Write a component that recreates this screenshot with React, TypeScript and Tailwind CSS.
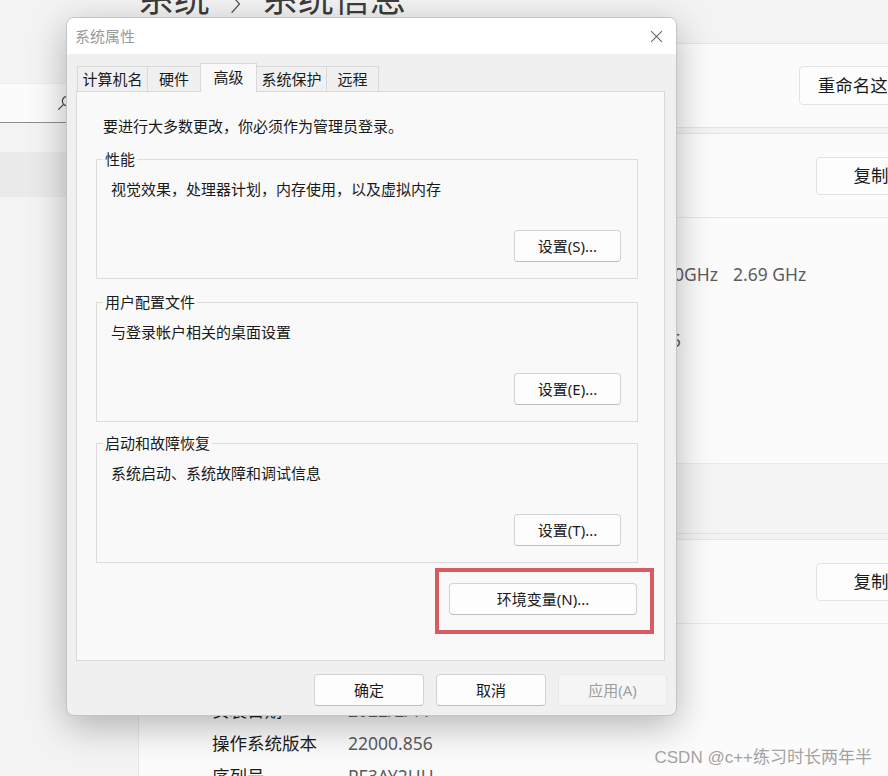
import React from "react";

type BtnProps = { label: string; className?: string; disabled?: boolean };

function WinButton({ label, className = "", disabled = false }: BtnProps) {
  return (
    <button
      type="button"
      disabled={disabled}
      className={`flex items-center justify-center rounded-[4px] border text-[15px] leading-none ${
        disabled
          ? "border-[#e9e9e9] bg-[#f5f5f5] text-[#9e9e9e]"
          : "border-[#d3d3d3] border-b-[#bdbdbd] bg-[#fdfdfd] text-[#1a1a1a]"
      } ${className}`}
    >
      {label}
    </button>
  );
}

function GroupBox({ title, text, button }: { title: string; text: string; button: string }) {
  return (
    <fieldset className="border border-[#dcdcdc]">
      <legend className="ml-[6px] px-[2px] text-[15px] leading-[20px] text-[#1a1a1a]">{title}</legend>
      <p className="mt-[10px] pl-[14px] text-[15px] leading-[20px] text-[#1a1a1a]">{text}</p>
      <div className="mt-[31px] flex justify-end pr-[16px] pb-[16px]">
        <WinButton label={button} className="h-[32px] w-[107px]" />
      </div>
    </fieldset>
  );
}

const tabs = [
  { label: "计算机名", w: "w-[71px]" },
  { label: "硬件", w: "w-[54px]" },
  { label: "高级", w: "w-[57px]", active: true },
  { label: "系统保护", w: "w-[71px]" },
  { label: "远程", w: "w-[53px]" },
];

// only the part of each row that shows to the right of the dialog is filled in
const specRows: React.ReactNode[] = [
  null,
  <>
    <span className="flex w-[370px] justify-end overflow-hidden whitespace-nowrap">@ 2.70GHz</span>
    <span className="ml-[15px] whitespace-nowrap">2.69 GHz</span>
  </>,
  null,
  <span className="flex w-[333px] justify-end overflow-hidden whitespace-nowrap">B25</span>,
  null,
  null,
  null,
];

const winRows = [
  { label: "", value: "" },
  { label: "", value: "" },
  { label: "安装日期", value: "2022/2/11" },
  { label: "操作系统版本", value: "22000.856" },
  { label: "序列号", value: "PF3AY2HH" },
];

function Chevron() {
  return (
    <svg viewBox="0 0 16 16" className="h-[14px] w-[14px]" fill="none" stroke="#555" strokeWidth="1.2">
      <path d="M5 3l5 5-5 5" />
    </svg>
  );
}

function SpecRow({ label, value }: { label: string; value: React.ReactNode }) {
  return (
    <div className="flex h-[33px] items-center pl-[73px] text-[17.5px]">
      <span className="w-[136px] shrink-0 text-[#1b1b1b]">{label}</span>
      <span className="flex items-center text-[#5c5c5c]">{value}</span>
    </div>
  );
}

export default function App() {
  return (
    <div className="relative flex h-[776px] w-[888px] overflow-hidden bg-[#f3f3f3] font-['Noto_Sans','Noto_Sans_CJK_SC',sans-serif]">
      {/* settings sidebar */}
      <aside className="w-[138px] shrink-0 pt-[83px]">
        <div className="mr-[16px] flex h-[40px] items-center rounded-r-[4px] border-t border-[#ededed] border-b border-b-[#8d8d8d] bg-[#fbfbfb] pl-[57px]">
          <svg viewBox="0 0 16 16" className="h-[16px] w-[16px]" fill="none" stroke="#444" strokeWidth="1.2">
            <circle cx="10" cy="6" r="4.6" />
            <path d="M6.6 9.4L1.6 14.4" strokeLinecap="round" />
          </svg>
        </div>
        <div className="mt-[29px] mr-[8px] h-[45px] rounded-r-[4px] bg-[#eaeaea]" />
      </aside>

      {/* settings content */}
      <main className="min-w-0 flex-1">
        <div className="flex h-[43px]">
          <h1 className="-mt-[23px] flex h-[44px] items-center text-[36px] leading-[44px] text-[#3c3c3c]">
            系统
            <span className="mx-[19px] mt-[10px]">
              <svg viewBox="0 0 16 24" className="h-[26px] w-[14px]" fill="none" stroke="#555" strokeWidth="1.4">
                <path d="M3 2l9 10-9 10" />
              </svg>
            </span>
            系统信息
          </h1>
        </div>

        <div className="flex h-[85px] w-[846px] items-center rounded-[5px] border border-[#e5e5e5] bg-[#fbfbfb] pl-[20px] pr-[24px]">
          <WinButton label="重命名这台电脑" className="ml-auto h-[39px] w-[160px] !text-[17.5px] !border-[#e3e3e3]" />
        </div>

        <div className="mt-[5px] w-[846px] rounded-[5px] border border-[#e5e5e5] bg-[#fbfbfb]">
          <div className="flex h-[84px] items-center border-b border-[#e8e8e8] pl-[73px] pr-[23px]">
            <WinButton label="复制" className="ml-auto h-[38px] w-[110px] !text-[17.5px] !border-[#e3e3e3]" />
            <span className="ml-[20px]">
              <Chevron />
            </span>
          </div>
          <div className="border-b border-[#e8e8e8] py-[7px]">
            {specRows.map((v, i) => (
              <SpecRow key={i} label="" value={v} />
            ))}
          </div>
          <div className="h-[69px] bg-[#f4f4f4]" />
        </div>

        <div className="mt-[5px] w-[846px] rounded-[5px] border border-[#e5e5e5] bg-[#fbfbfb]">
          <div className="flex h-[84px] items-center border-b border-[#e8e8e8] pl-[73px] pr-[23px]">
            <WinButton label="复制" className="ml-auto h-[38px] w-[110px] !text-[17.5px] !border-[#e3e3e3]" />
            <span className="ml-[20px]">
              <Chevron />
            </span>
          </div>
          <div className="pt-[4px] pb-[10px]">
            {winRows.map((r, i) => (
              <SpecRow key={i} label={r.label} value={r.value} />
            ))}
          </div>
        </div>
      </main>

      {/* 系统属性 dialog */}
      <div className="absolute left-[66px] top-[17px] flex h-[699px] w-[611px] flex-col overflow-hidden rounded-[8px] border border-[#c4c4c4] bg-[#f0f0f0] shadow-[0_10px_36px_rgba(0,0,0,0.28)]">
        <div className="flex h-[36px] shrink-0 items-center bg-white pl-[8px]">
          <span className="text-[15px] text-[#9a9a9a]">系统属性</span>
          <span className="ml-auto flex w-[40px] items-center justify-center">
            <svg viewBox="0 0 12 12" className="h-[13px] w-[13px]" fill="none" stroke="#666" strokeWidth="1">
              <path d="M1 1l10 10M11 1L1 11" />
            </svg>
          </span>
        </div>

        <div className="ml-[9px] mr-[11px] mt-[9px]">
          <div className="relative z-10 -mb-px flex items-end pl-[1px]">
            {tabs.map((t, i) => (
              <div
                key={t.label}
                className={`flex items-center justify-center border border-[#d9d9d9] text-[15px] text-[#1a1a1a] ${t.w} ${
                  i > 0 ? "-ml-px" : ""
                } ${
                  t.active
                    ? "h-[29px] border-b-0 bg-[#f9f9f9] pb-[2px]"
                    : "mb-px h-[25px] border-b-0 bg-[#f0f0f0]"
                }`}
              >
                {t.label}
              </div>
            ))}
          </div>

          <div className="h-[570px] border border-[#d9d9d9] bg-[#f9f9f9] pt-[24px] pr-[26px] pl-[19px]">
            <p className="pl-[7px] text-[15px] leading-[20px] text-[#1a1a1a]">
              要进行大多数更改，你必须作为管理员登录。
            </p>
            <div className="mt-[13px]">
              <GroupBox title="性能" text="视觉效果，处理器计划，内存使用，以及虚拟内存" button="设置(S)..." />
            </div>
            <div className="mt-[13px]">
              <GroupBox title="用户配置文件" text="与登录帐户相关的桌面设置" button="设置(E)..." />
            </div>
            <div className="mt-[11px]">
              <GroupBox title="启动和故障恢复" text="系统启动、系统故障和调试信息" button="设置(T)..." />
            </div>
            <div className="-mr-[16px] mt-[5px] flex justify-end">
              <div className="border-[4px] border-[#d85a62] pt-[11px] pr-[13px] pb-[15px] pl-[10px]">
                <WinButton label="环境变量(N)..." className="h-[32px] w-[188px]" />
              </div>
            </div>
          </div>
        </div>

        <div className="mt-[13px] flex justify-end gap-[12px] pr-[9px]">
          <WinButton label="确定" className="h-[32px] w-[110px]" />
          <WinButton label="取消" className="h-[32px] w-[110px]" />
          <WinButton label="应用(A)" className="h-[32px] w-[109px]" disabled />
        </div>
      </div>

      <div className="absolute bottom-[6px] right-[16px] font-['Liberation_Sans','Noto_Sans_CJK_SC',sans-serif] text-[17px] leading-[24px] text-[#a3a3a3]">
        CSDN @c++练习时长两年半
      </div>
    </div>
  );
}
